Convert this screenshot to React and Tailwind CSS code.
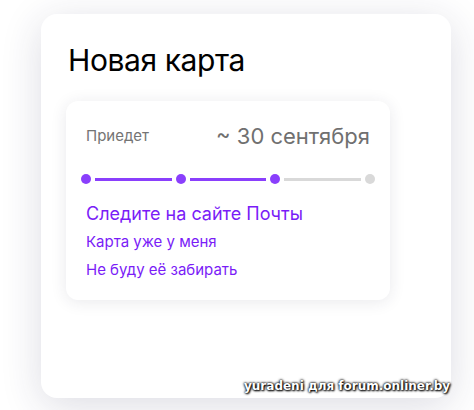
export default function App() {
  return (
    <div className="relative w-[474px] h-[410px] overflow-hidden bg-white" style={{ fontFamily: 'Inter, "Noto Sans", sans-serif' }}>
      <div className="pt-[14px] pl-[41px]">
        <div className="w-[410px] h-[384px] rounded-[16px] bg-white shadow-[0_8px_40px_rgba(40,40,80,0.16)] pl-[25px] pt-[28px]">
          <h1 className="pl-[2px] text-[30px] leading-[36px] text-black font-normal tracking-[-0.4px]">Новая карта</h1>
          <div className="mt-[23px] w-[324px] h-[199px] rounded-[12px] bg-white shadow-[0_2px_16px_rgba(40,40,70,0.10)] px-[20px] pt-[21px]">
            <div className="flex items-center justify-between">
              <span className="text-[15px] leading-[24px] text-[#747474]">Приедет</span>
              <span className="text-[22px] leading-[28px] text-[#707070]">~ 30 сентября</span>
            </div>
            <div className="mt-[24px] mx-[-5px] flex items-center">
              <div className="w-[10px] h-[10px] rounded-full bg-[#8a3ffc]" />
              <div className="mx-[4px] flex-1 h-[3px] bg-[#8a3ffc]" />
              <div className="w-[10px] h-[10px] rounded-full bg-[#8a3ffc]" />
              <div className="mx-[4px] flex-1 h-[3px] bg-[#8a3ffc]" />
              <div className="w-[10px] h-[10px] rounded-full bg-[#8a3ffc]" />
              <div className="mx-[4px] flex-1 h-[3px] bg-[#d9d9d9]" />
              <div className="w-[10px] h-[10px] rounded-full bg-[#d9d9d9]" />
            </div>
            <div className="mt-[17px] flex flex-col">
              <span className="text-[18px] leading-[26px] text-[#7a1cf7]">Следите на сайте Почты</span>
              <span className="mt-[2px] text-[15px] leading-[26px] text-[#7a1cf7]">Карта уже у меня</span>
              <span className="mt-[2px] text-[15px] leading-[26px] text-[#7a1cf7]">Не буду её забирать</span>
            </div>
          </div>
        </div>
      </div>
      <div className="absolute left-[244px] top-[377px] text-[12px] leading-[18px] font-bold text-white [text-shadow:0_0_2px_#000,0_0_3px_#000,1px_1px_2px_#000]" style={{ fontFamily: '"DejaVu Sans", sans-serif' }}>
        yuradeni для forum.onliner.by
      </div>
    </div>
  );
}
